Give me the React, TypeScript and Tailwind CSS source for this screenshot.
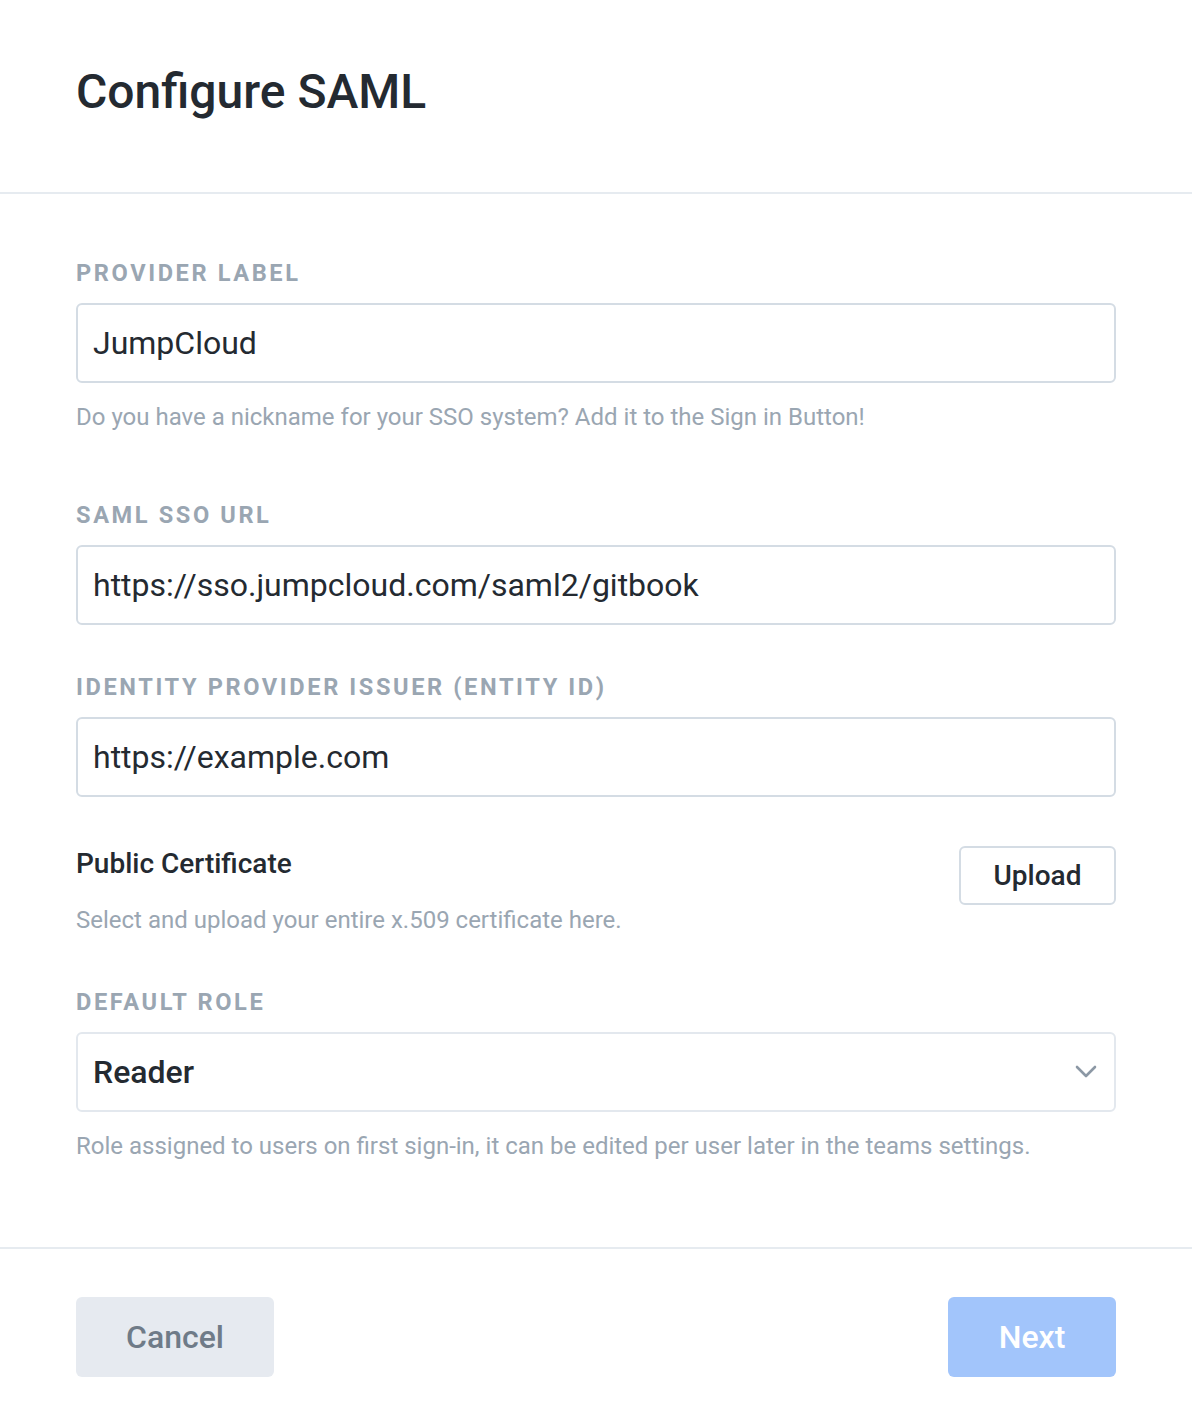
import React from "react";

const Label = ({ text }: { text: string }) => (
  <div className="text-[23.6px] leading-[28px] font-bold tracking-[2.6px] text-[#9aa6b2] mb-[16px]">
    {text}
  </div>
);

const Field = ({ value }: { value: string }) => (
  <div className="h-[80px] border-2 border-[#d4dce4] rounded-[6px] flex items-center px-[15px] text-[32px] text-[#242a31]">
    {value}
  </div>
);

const Hint = ({ text }: { text: string }) => (
  <div className="text-[24px] leading-[30px] text-[#9aa6b2]">{text}</div>
);

const App = () => {
  return (
    <div
      className="w-[1192px] h-[1422px] bg-white flex flex-col"
      style={{ fontFamily: "Roboto, 'Liberation Sans', sans-serif" }}
    >
      {/* header */}
      <div className="h-[194px] border-b-2 border-[#e6ebf0] px-[76px] pt-[64px]">
        <h1 className="text-[48px] leading-[56px] font-medium text-[#242a31]">Configure SAML</h1>
      </div>

      {/* body */}
      <div className="px-[76px] pt-[65px] pb-[86px] border-b-2 border-[#e6ebf0]">
        <Label text="PROVIDER LABEL" />
        <Field value="JumpCloud" />
        <div className="mt-[19px]">
          <Hint text="Do you have a nickname for your SSO system? Add it to the Sign in Button!" />
        </div>

        <div className="mt-[69px]">
          <Label text="SAML SSO URL" />
          <Field value="https://sso.jumpcloud.com/saml2/gitbook" />
        </div>

        <div className="mt-[48px]">
          <Label text="IDENTITY PROVIDER ISSUER (ENTITY ID)" />
          <Field value="https://example.com" />
        </div>

        <div className="mt-[49px] flex justify-between items-start">
          <div>
            <div className="text-[28px] leading-[36px] font-medium text-[#242a31]">Public Certificate</div>
            <div className="mt-[23px]">
              <Hint text="Select and upload your entire x.509 certificate here." />
            </div>
          </div>
          <button className="w-[157px] h-[59px] border-2 border-[#d4dce4] rounded-[6px] text-[28px] font-medium text-[#242a31] bg-white">
            Upload
          </button>
        </div>

        <div className="mt-[53px]">
          <Label text="DEFAULT ROLE" />
          <div className="h-[80px] border-2 border-[#e3e8ee] rounded-[6px] flex items-center justify-between pl-[15px] pr-[16px] text-[32px] font-medium text-[#242a31]">
            <span>Reader</span>
            <svg width="24" height="14" viewBox="0 0 24 14" fill="none">
              <path d="M3 2 L12 11 L21 2" stroke="#8c98a5" strokeWidth="2.6" strokeLinecap="round" strokeLinejoin="round" />
            </svg>
          </div>
          <div className="mt-[19px]">
            <Hint text="Role assigned to users on first sign-in, it can be edited per user later in the teams settings." />
          </div>
        </div>
      </div>

      {/* footer */}
      <div className="px-[76px] pt-[48px] flex justify-between">
        <button className="w-[198px] h-[80px] rounded-[6px] bg-[#e6eaf0] text-[32px] font-medium text-[#6f7b88]">
          Cancel
        </button>
        <button className="w-[168px] h-[80px] rounded-[6px] bg-[#a2c5fb] text-[32px] font-medium text-white">
          Next
        </button>
      </div>
    </div>
  );
};

export default App;
